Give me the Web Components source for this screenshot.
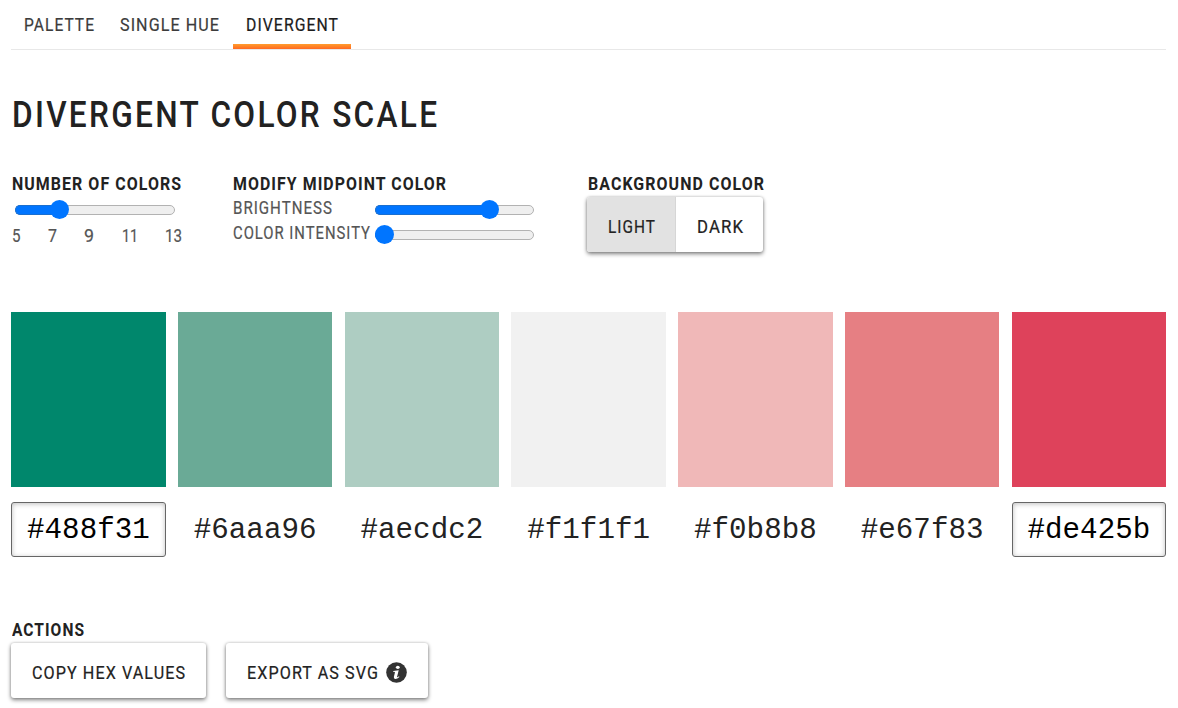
<!DOCTYPE html>
<html lang="en">
<head>
<meta charset="utf-8">
<title>Divergent color scale</title>
<style>
body { margin: 0; background: #fff; color: #222; font-family: Roboto, "Liberation Sans", sans-serif; overflow: hidden; }
</style>
</head>
<body>
<divergent-page></divergent-page>
<script>
const define = (name, html, setup) => {
  const template = document.createElement('template');
  template.innerHTML = html;
  customElements.define(name, class extends HTMLElement {
    connectedCallback() {
      if (this.shadowRoot) return;
      this.attachShadow({ mode: 'open' }).append(template.content.cloneNode(true));
      if (setup) setup(this, this.shadowRoot);
    }
  });
};

/* Condensed lettering: the text is set to a given measure in px. */
define('type-line', `
<style>
:host { display: block; flex: none; white-space: nowrap; font-size: 18px; line-height: 25px; letter-spacing: 1.2px; -webkit-text-stroke: var(--stroke, .2px) currentColor; }
span { display: inline-block; transform-origin: 0 50%; vertical-align: top; }
</style><span><slot></slot></span>`, (el, root) => {
  const span = root.querySelector('span');
  const width = +el.getAttribute('width');
  el.style.width = width + 'px';
  const spacing = parseFloat(getComputedStyle(el).letterSpacing) || 0;
  const natural = span.getBoundingClientRect().width - spacing;
  span.style.transform = 'scaleX(' + width / natural + ')';
});

define('tab-item', `
<style>
:host { display: flex; align-items: center; box-sizing: border-box; height: 49px; padding: 0 13px; color: #3c3c3c; }
:host([selected]) { color: #1c1c1c; background: linear-gradient(#ff9d2e, #ff6820) bottom / 100% 5px no-repeat; }
</style><slot></slot>`);

define('tab-bar', `
<style>:host { display: flex; height: 49px; border-bottom: 1px solid #e8e8e8; }</style><slot></slot>`);

define('range-slider', `
<style>
:host { display: flex; align-items: center; height: 25px; width: 160px; flex: none; }
.track { flex: 1; height: 10px; box-sizing: border-box; border: 1px solid #b2b2b2; border-radius: 5px; background: #efefef; position: relative; }
.fill { position: absolute; left: -1px; top: -1px; height: 10px; border-radius: 5px 0 0 5px; background: #0075ff; box-sizing: border-box; border: 1px solid #1a6fd0; border-right: 0; }
.thumb { position: absolute; top: -5.5px; width: 19px; height: 19px; margin-left: -10.5px; border-radius: 50%; background: #0075ff; }
</style><div class="track"><div class="fill"></div><div class="thumb"></div></div>`, (el, root) => {
  const value = el.getAttribute('value');
  root.querySelector('.fill').style.width = value + 'px';
  root.querySelector('.thumb').style.left = value + 'px';
});

define('control-group', `
<style>
:host { display: block; flex: none; }
.title { height: 26px; font-weight: 700; color: #222; display: block; --stroke: 0; }
</style><slot name="title" class="title"></slot><slot></slot>`);

define('raised-box', `
<style>
:host { display: flex; height: 55px; width: max-content; background: #fff; border-radius: 3px; box-shadow: 0 2px 4px rgba(0,0,0,.48), 0 0 3px rgba(0,0,0,.2); }
</style><slot></slot>`);

define('push-button', `
<style>
:host { display: flex; align-items: center; box-sizing: border-box; height: 55px; padding: 4px 21px 0; gap: 8px; color: #222; }
:host([pressed]) { background: #e2e2e2; border-right: 1px solid #d6d6d6; border-radius: 3px 0 0 3px; }
</style><slot></slot>`);

define('info-icon', `
<style>:host { display: block; width: 21px; height: 21px; } svg { display: block; }</style>
<svg width="21" height="21" viewBox="0 0 21 21"><circle cx="10.5" cy="10.5" r="10.3" fill="#333"/>
<ellipse cx="11.8" cy="5.3" rx="1.9" ry="1.6" fill="#fff"/>
<path d="M7.3 9.1 L12.7 8.2 L11 15 Q11 15.8 13 14.3 L13.4 14.9 Q11.3 17.1 9.2 17 Q7.4 16.8 7.9 14.8 L9 10.2 Q9 9.7 7.2 9.9 Z" fill="#fff"/></svg>`);

define('color-swatch', `
<style>
:host { display: block; min-width: 0; }
.chip { height: 175px; }
.code { box-sizing: border-box; height: 55px; margin-top: 15px; display: flex; align-items: center; justify-content: center; border: 1px solid transparent; border-radius: 3px; font: 29.2px "Liberation Mono", monospace; color: #222; padding-top: 1px; }
:host([editable]) .code { border-color: #666; color: #000; box-shadow: inset 0 1px 5px rgba(0,0,0,.25); }
</style><div class="chip"></div><div class="code"><slot></slot></div>`, (el, root) => {
  root.querySelector('.chip').style.background = el.getAttribute('fill');
});

define('divergent-page', `
<style>
:host { display: block; height: 708px; box-sizing: border-box; padding: 0 12px 0 11px; }
h1 { margin: 37px 0 0 1px; font-size: 36px; font-weight: 500; height: 56px; }
h1 type-line { font-size: 36px; line-height: 56px; letter-spacing: 2.6px; --stroke: 0; }
.controls { display: flex; margin-top: 28px; height: 82px; }
.count { width: 170px; margin: 0 51px 0 1px; }
.count range-slider { margin-left: 3px; }
.ticks { display: flex; justify-content: space-between; color: #555; padding-top: 1px; }
.ticks type-line { letter-spacing: 0; }
.mid { width: 301px; margin-right: 53px; }
.row { display: flex; justify-content: space-between; color: #555; height: 25px; }
.row type-line { line-height: 21px; }
.row range-slider { width: 159px; }
.bg type-line[slot] { margin-left: 1px; }
.scale { display: grid; grid-template-columns: repeat(7, 1fr); column-gap: 12.45px; width: 1154.8px; margin: 59px 0 0 .25px; }
.actions { margin-top: 60px; }
.actions type-line[slot] { margin-left: 1px; }
.buttons { display: flex; gap: 20px; }
</style>
<tab-bar class="tabs">
  <tab-item><type-line width="70">PALETTE</type-line></tab-item>
  <tab-item><type-line width="99">SINGLE HUE</type-line></tab-item>
  <tab-item selected style="padding-left:13px;margin-left:1px"><type-line width="92">DIVERGENT</type-line></tab-item>
</tab-bar>
<h1><type-line width="425">DIVERGENT COLOR SCALE</type-line></h1>
<div class="controls">
  <control-group class="count">
    <type-line slot="title" width="169">NUMBER OF COLORS</type-line>
    <range-slider value="44"></range-slider>
    <div class="ticks"><type-line width="8.5">5</type-line><type-line width="9">7</type-line><type-line width="10">9</type-line><type-line width="16">11</type-line><type-line width="17">13</type-line></div>
  </control-group>
  <control-group class="mid">
    <type-line slot="title" width="213">MODIFY MIDPOINT COLOR</type-line>
    <div class="row"><type-line width="99">BRIGHTNESS</type-line><range-slider value="114"></range-slider></div>
    <div class="row"><type-line width="137">COLOR INTENSITY</type-line><range-slider value="9.5"></range-slider></div>
  </control-group>
  <control-group class="bg">
    <type-line slot="title" width="176">BACKGROUND COLOR</type-line>
    <raised-box>
      <push-button pressed style="padding-right:20px"><type-line width="47">LIGHT</type-line></push-button>
      <push-button style="padding-right:20px"><type-line width="46">DARK</type-line></push-button>
    </raised-box>
  </control-group>
</div>
<div class="scale">
  <color-swatch fill="#00876c" editable>#488f31</color-swatch>
  <color-swatch fill="#6aaa96">#6aaa96</color-swatch>
  <color-swatch fill="#aecdc2">#aecdc2</color-swatch>
  <color-swatch fill="#f1f1f1">#f1f1f1</color-swatch>
  <color-swatch fill="#f0b8b8">#f0b8b8</color-swatch>
  <color-swatch fill="#e67f83">#e67f83</color-swatch>
  <color-swatch fill="#de425b" editable>#de425b</color-swatch>
</div>
<control-group class="actions">
  <type-line slot="title" width="72">ACTIONS</type-line>
  <div class="buttons">
    <raised-box><push-button><type-line width="153">COPY HEX VALUES</type-line></push-button></raised-box>
    <raised-box><push-button><type-line width="131">EXPORT AS SVG</type-line><info-icon></info-icon></push-button></raised-box>
  </div>
</control-group>`);
</script>
</body>
</html>
